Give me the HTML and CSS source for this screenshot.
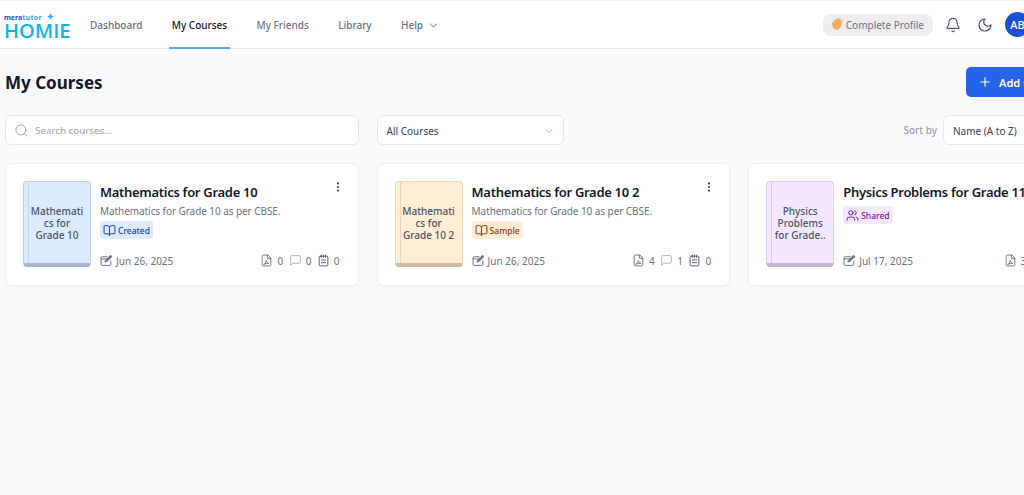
FILE: index.html
```html
<!DOCTYPE html>
<html lang="en">
<head>
<meta charset="utf-8">
<title>My Courses</title>
<link rel="stylesheet" href="styles.css">
</head>
<body>
<svg class="defs" width="0" height="0" aria-hidden="true">
  <symbol id="i-book" viewBox="0 0 24 24"><path d="M12 7v14"/><path d="M3 18a1 1 0 0 1-1-1V4a1 1 0 0 1 1-1h5a4 4 0 0 1 4 4 4 4 0 0 1 4-4h5a1 1 0 0 1 1 1v13a1 1 0 0 1-1 1h-6a3 3 0 0 0-3 3 3 3 0 0 0-3-3z"/></symbol>
  <symbol id="i-users" viewBox="0 0 24 24"><path d="M16 21v-2a4 4 0 0 0-4-4H6a4 4 0 0 0-4 4v2"/><circle cx="9" cy="7" r="4"/><path d="M22 21v-2a4 4 0 0 0-3-3.870"/><path d="M16 3.130a4 4 0 0 1 0 7.750"/></symbol>
  <symbol id="i-edit" viewBox="0 0 24 24"><path d="M20 13v6a2 2 0 0 1-2 2H4a2 2 0 0 1-2-2V7a2 2 0 0 1 2-2h9"/><path d="M2 9h10"/><path d="M21 3.500a1.800 1.800 0 0 0-2.600-.1L10 11.500l-1 3.500 3.500-1L21 6z" fill="currentColor"/></symbol>
  <symbol id="i-pdf" viewBox="0 0 24 24"><path d="M14 2H6a2 2 0 0 0-2 2v16a2 2 0 0 0 2 2h12a2 2 0 0 0 2-2V8z"/><path d="M14 2v6h6"/><path d="M7.500 19c2-1 3.500-4 4-7 .5 3 2 5 5 5.500-3-.5-6.500 0-9 1.500z"/></symbol>
  <symbol id="i-msg" viewBox="0 0 24 24"><path d="M21 15a2 2 0 0 1-2 2H7l-4 4V5a2 2 0 0 1 2-2h14a2 2 0 0 1 2 2z"/></symbol>
  <symbol id="i-clip" viewBox="0 0 24 24"><rect x="4" y="4" width="16" height="18" rx="2"/><path d="M8 2v4M12 2v4M16 2v4M8 11h8M8 16h8"/></symbol>
  <symbol id="i-kebab" viewBox="0 0 4 10"><circle cx="2" cy="1.400" r="1.100"/><circle cx="2" cy="5" r="1.100"/><circle cx="2" cy="8.600" r="1.100"/></symbol>
</svg>

<header class="topbar">
  <a class="logo">
    <span class="logo-small"><span class="logo-mera">mera</span><span class="logo-tutor">tutor</span></span>
    <svg class="logo-star" viewBox="0 0 10 10"><path d="M5 0c.4 3 1.600 4.300 5 5-3.400.7-4.600 2-5 5-.4-3-1.600-4.300-5-5 3.400-.7 4.600-2 5-5z"/></svg>
    <span class="logo-big">HOMIE</span>
  </a>
  <nav class="nav">
    <a class="nav-item">Dashboard</a>
    <a class="nav-item is-active">My Courses</a>
    <a class="nav-item">My Friends</a>
    <a class="nav-item">Library</a>
    <a class="nav-item">Help
      <svg class="icon chev" viewBox="0 0 24 24"><path d="m6 9 6 6 6-6"/></svg>
    </a>
  </nav>
  <div class="top-actions">
    <a class="profile-pill">
      <svg class="wave" viewBox="1 1 12 12"><path d="M3.200 2.600c.5-.4 1-.2 1.400.3l.6.9-.3-1.600c-.1-.6.200-1 .7-1.100.5-.1.900.2 1 .8l.5 1.800.1-1.700c0-.6.400-.9.900-.9s.8.400.8 1l-.1 2.200.5-1c.3-.5.700-.6 1.100-.4.400.2.500.7.300 1.200l-.9 2.700c-.5 2.300-1.100 4.800-3.800 5-2.200.2-3.400-1.100-4.300-2.800L1 6c-.3-.5-.2-1 .2-1.200.4-.3.900-.1 1.200.3l1 1.300-.5-2.400c-.1-.6 0-1.100.3-1.400z"/></svg>
      Complete Profile
    </a>
    <svg class="icon top-icon" viewBox="0 0 24 24"><path d="M10.300 21a1.900 1.900 0 0 0 3.400 0"/><path d="M3.300 15.300A1 1 0 0 0 4 17h16a1 1 0 0 0 .7-1.700C19.400 14 18 12.500 18 8A6 6 0 0 0 6 8c0 4.500-1.400 6-2.700 7.300"/></svg>
    <svg class="icon top-icon" viewBox="0 0 24 24"><path d="M12 3a6 6 0 0 0 9 9 9 9 0 1 1-9-9Z"/></svg>
    <span class="avatar">AB</span>
  </div>
</header>

<main class="content">
  <div class="title-row">
    <h1 class="page-title">My Courses</h1>
    <button class="add-btn">
      <svg class="icon plus" viewBox="0 0 24 24"><path d="M5 12h14M12 5v14"/></svg>
      Add Course
    </button>
  </div>

  <div class="filter-row">
    <label class="search">
      <svg class="icon search-icon" viewBox="0 0 24 24"><circle cx="11" cy="11" r="8"/><path d="m21 21-4.300-4.300"/></svg>
      <span class="search-text">Search courses...</span>
    </label>
    <div class="select select-all">All Courses
      <svg class="icon select-chev" viewBox="0 0 24 24"><path d="m6 9 6 6 6-6"/></svg>
    </div>
    <div class="sort">
      <span class="sort-label">Sort by</span>
      <div class="select select-sort">Name (A to Z)</div>
    </div>
  </div>

  <section class="grid">
    <article class="card">
      <div class="book book-blue"><span class="book-title">Mathematics for Grade 10</span></div>
      <div class="info">
        <div class="title-line"><h2 class="course-title">Mathematics for Grade 10</h2>
          <svg class="kebab"><use href="#i-kebab"/></svg></div>
        <p class="desc">Mathematics for Grade 10 as per CBSE.</p>
        <span class="badge badge-blue"><svg class="icon badge-icon"><use href="#i-book"/></svg>Created</span>
        <div class="meta">
          <span class="date"><svg class="icon meta-icon"><use href="#i-edit"/></svg>Jun 26, 2025</span>
          <span class="stats">
            <span class="stat"><svg class="icon stat-icon"><use href="#i-pdf"/></svg>0</span>
            <span class="stat"><svg class="icon stat-icon light"><use href="#i-msg"/></svg>0</span>
            <span class="stat"><svg class="icon stat-icon dark"><use href="#i-clip"/></svg>0</span>
          </span>
        </div>
      </div>
    </article>

    <article class="card">
      <div class="book book-orange"><span class="book-title">Mathematics for Grade 10 2</span></div>
      <div class="info">
        <div class="title-line"><h2 class="course-title">Mathematics for Grade 10 2</h2>
          <svg class="kebab"><use href="#i-kebab"/></svg></div>
        <p class="desc">Mathematics for Grade 10 as per CBSE.</p>
        <span class="badge badge-orange"><svg class="icon badge-icon"><use href="#i-book"/></svg>Sample</span>
        <div class="meta">
          <span class="date"><svg class="icon meta-icon"><use href="#i-edit"/></svg>Jun 26, 2025</span>
          <span class="stats">
            <span class="stat"><svg class="icon stat-icon"><use href="#i-pdf"/></svg>4</span>
            <span class="stat"><svg class="icon stat-icon light"><use href="#i-msg"/></svg>1</span>
            <span class="stat"><svg class="icon stat-icon dark"><use href="#i-clip"/></svg>0</span>
          </span>
        </div>
      </div>
    </article>

    <article class="card">
      <div class="book book-purple"><span class="book-title">Physics Problems for Grade..</span></div>
      <div class="info">
        <div class="title-line"><h2 class="course-title">Physics Problems for Grade 11</h2>
          <svg class="kebab"><use href="#i-kebab"/></svg></div>
        <span class="badge badge-purple"><svg class="icon badge-icon"><use href="#i-users"/></svg>Shared</span>
        <div class="meta">
          <span class="date"><svg class="icon meta-icon"><use href="#i-edit"/></svg>Jul 17, 2025</span>
          <span class="stats">
            <span class="stat"><svg class="icon stat-icon"><use href="#i-pdf"/></svg>3</span>
            <span class="stat"><svg class="icon stat-icon light"><use href="#i-msg"/></svg>0</span>
            <span class="stat"><svg class="icon stat-icon dark"><use href="#i-clip"/></svg>0</span>
          </span>
        </div>
      </div>
    </article>
  </section>
</main>
</body>
</html>
```

FILE: styles.css
```css
* { box-sizing: border-box; }
html, body { margin: 0; height: 100%; overflow: hidden; }
body {
  width: 1103px;
  background: #f8fafc;
  font-family: "Noto Sans", "Liberation Sans", sans-serif;
  color: #111827;
}
.defs { position: absolute; }
.icon { fill: none; stroke: currentColor; stroke-width: 2; stroke-linecap: round; stroke-linejoin: round; flex: none; }

.topbar {
  width: 1038px;
  height: 49px;
  display: flex;
  align-items: center;
  background: #fff;
  border-top: 1px solid #f3f4f6;
  border-bottom: 1px solid #e5e7eb;
  padding: 0 8px 0 4px;
}
.logo { position: relative; display: flex; flex-direction: column; flex: none; width: 66px; height: 26px; margin-top: 4px; color: #0ab4ea; }
.logo-small { font-size: 7px; line-height: 8px; font-weight: 700; white-space: nowrap; }
.logo-mera { color: #1d4fb8; }
.logo-tutor { color: #17a6e4; letter-spacing: .3px; }
.logo-star { position: absolute; left: 43px; top: -1px; width: 7px; height: 7px; fill: #0ab4ea; }
.logo-big { font-size: 20px; line-height: 18px; font-weight: 600; letter-spacing: 0; font-family: "Open Sans", sans-serif; }

.nav { display: flex; height: 100%; margin-left: 17px; gap: 23.300px; }
.nav-item {
  display: flex;
  align-items: center;
  gap: 4px;
  padding: 2px 3px 0;
  margin: 0 0 -1px;
  font-size: 10px;
  font-weight: 500;
  color: #6b7280;
  border-bottom: 2px solid transparent;
}
.nav-item.is-active { color: #111827; border-bottom-color: #60a5ea; }
.chev { width: 13px; height: 13px; stroke-width: 1.700; }

.top-actions { margin-left: auto; display: flex; align-items: center; }
.profile-pill {
  display: flex;
  align-items: center;
  gap: 1px;
  height: 22px;
  padding: 0 9px;
  border-radius: 8px;
  background: #eceef2;
  font-size: 10px;
  color: #6b7280;
}
.wave { width: 13px; height: 13px; fill: #f2ab5c; }
.top-icon { width: 16px; height: 16px; color: #4b5563; margin-left: 12px; stroke-width: 1.800; }
.top-icon + .top-icon { margin-left: 16px; }
.avatar {
  width: 25px;
  height: 25px;
  margin-left: 12px;
  display: flex;
  align-items: center;
  justify-content: center;
  border-radius: 50%;
  background: #1d4ed8;
  color: #fff;
  font-size: 11px;
  font-weight: 500;
}

.content { padding: 0 5px; }
.title-row { display: flex; align-items: center; justify-content: space-between; height: 66px; }
.page-title { margin: 0; font-size: 17px; font-weight: 700; color: #111827; }
.add-btn {
  display: flex;
  align-items: center;
  gap: 7px;
  width: 132px;
  height: 30px;
  padding: 0 12px;
  border: 0;
  border-radius: 5px;
  background: #2563eb;
  color: #fff;
  font: 600 11px "Noto Sans", sans-serif;
  white-space: nowrap;
}
.plus { width: 14px; height: 14px; }

.filter-row { display: flex; align-items: center; height: 30px; gap: 18px; }
.search {
  flex: none;
  width: 353.600px;
  height: 30px;
  display: flex;
  align-items: center;
  gap: 6px;
  padding: 0 8px;
  background: #fff;
  border: 1px solid #e5e7eb;
  border-radius: 6px;
}
.search-icon { width: 15px; height: 15px; color: #9ca3af; stroke-width: 1.600; }
.search-text { font-size: 9.800px; color: #9ca3af; }
.select {
  height: 30px;
  display: flex;
  align-items: center;
  padding-top: 1px;
  background: #fff;
  border: 1px solid #e5e7eb;
  border-radius: 6px;
  font-size: 10px;
  color: #374151;
}
.select-all { width: 187px; padding-left: 9px; padding-right: 8px; justify-content: space-between; }
.select-chev { width: 12px; height: 12px; color: #9ca3af; stroke-width: 1.500; }
.sort { margin-left: auto; display: flex; align-items: center; gap: 6px; }
.sort-label { font-size: 10px; font-weight: 500; color: #9ca3af; }
.select-sort { width: 155px; padding-left: 9px; padding-right: 9px; }

.grid { display: grid; grid-template-columns: repeat(3, 353.600px); gap: 18px; margin-top: 18px; }
.card {
  height: 123px;
  display: flex;
  gap: 9px;
  padding: 17px;
  background: #fff;
  border: 1px solid #eef0f3;
  border-radius: 6px;
  box-shadow: 0 1px 2px rgba(0, 0, 0, .04);
}
.book {
  flex: none;
  width: 68px;
  height: 86px;
  display: flex;
  align-items: center;
  justify-content: center;
  padding: 0 6px;
  border: 1px solid;
  border-bottom-width: 4px;
  border-radius: 4px;
  background-image: linear-gradient(to right, transparent 4px, var(--spine) 4px, var(--spine) 5px, transparent 5px);
}
.book-blue { background-color: #dbeafe; border-color: #bfd0e8 #bfd0e8 #a9b7cb; --spine: #c3d7f3; }
.book-orange { background-color: #ffedd5; border-color: #ecd7bc #ecd7bc #cdbba5; --spine: #e6d3b8; }
.book-purple { background-color: #f3e8ff; border-color: #dccfe9 #dccfe9 #c3b6d0; --spine: #d9cbe9; }
.book-title {
  width: 100%;
  font-size: 10px;
  line-height: 12px;
  font-weight: 500;
  color: #4b5563;
  text-align: center;
  overflow-wrap: anywhere;
}
.info { flex: 1; min-width: 0; display: flex; flex-direction: column; align-items: flex-start; }
.title-line { width: 100%; display: flex; justify-content: space-between; align-items: flex-start; }
.course-title { margin: 2px 0 2px; font-size: 13px; line-height: 18px; font-weight: 600; letter-spacing: -.3px; color: #111827; white-space: nowrap; }
.kebab { flex: none; width: 4px; height: 10px; fill: #374151; margin: 1px 1px 0 0; }
.desc { margin: 1px 0 0; font-size: 10px; line-height: 14px; letter-spacing: -.07px; color: #6b7280; white-space: nowrap; }
.badge {
  display: flex;
  align-items: center;
  gap: 2px;
  height: 18px;
  margin-top: 3px;
  padding: 0 3px;
  border-radius: 3px;
  font-size: 8.500px;
  font-weight: 500;
}
.badge-icon { width: 13px; height: 13px; stroke-width: 1.800; }
.badge-blue { background: #dbeafe; color: #1e40af; }
.badge-orange { background: #ffedd5; color: #9a3412; }
.badge-purple { background: #f3e8ff; color: #6b21a8; }
.meta { margin-top: auto; width: 100%; display: flex; align-items: center; justify-content: space-between; height: 14px; padding-bottom: 1px; font-size: 10px; color: #6b7280; }
.date { display: flex; align-items: center; gap: 3px; }
.meta-icon { width: 13px; height: 13px; stroke-width: 1.800; }
.stats { display: flex; gap: 5.500px; flex: none; margin-right: 1px; }
.stat { display: flex; align-items: center; gap: 4px; }
.stat-icon { width: 13px; height: 13px; stroke-width: 1.700; }
.stat-icon.light { stroke-width: 1.500; color: #9ca3af; }
.stat-icon.dark { color: #4b5563; }
```
